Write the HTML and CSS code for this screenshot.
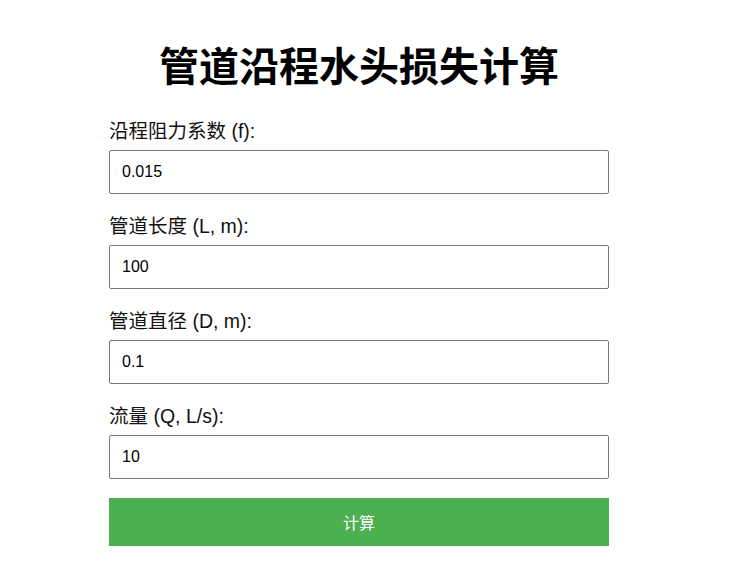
FILE: index.html
```html
<!DOCTYPE html>
<html lang="zh">
<head>
<meta charset="utf-8">
<title>管道沿程水头损失计算</title>
<link rel="stylesheet" href="styles.css">
</head>
<body>
<div class="container">
  <h1 class="title">管道沿程水头损失计算</h1>
  <form class="calc-form">
    <div class="field">
      <label class="field-label" for="f">沿程阻力系数 (f):</label>
      <input class="field-input" id="f" type="text" value="0.015">
    </div>
    <div class="field">
      <label class="field-label" for="L">管道长度 (L, m):</label>
      <input class="field-input" id="L" type="text" value="100">
    </div>
    <div class="field">
      <label class="field-label" for="D">管道直径 (D, m):</label>
      <input class="field-input" id="D" type="text" value="0.1">
    </div>
    <div class="field field-last">
      <label class="field-label" for="Q">流量 (Q, L/s):</label>
      <input class="field-input" id="Q" type="text" value="10">
    </div>
    <button class="calc-btn" type="button">计算</button>
  </form>
</div>
</body>
</html>
```
FILE: styles.css
```css
html, body {
  margin: 0;
  padding: 0;
  background: #fff;
}
body {
  font-family: "Liberation Sans", "Noto Sans CJK SC", sans-serif;
  color: #000;
}
.container {
  width: 500px;
  margin-left: 109px;
  padding-top: 43px;
}
.title {
  margin: 0 0 29px;
  height: 48px;
  font-size: 40px;
  line-height: 48px;
  font-weight: bold;
  text-align: center;
}
.calc-form {
  display: block;
}
.field {
  display: block;
  height: 74px;
  margin-bottom: 21px;
}
.field-last {
  margin-bottom: 19px;
}
.field-label {
  display: block;
  height: 22px;
  font-size: 19.5px;
  line-height: 22px;
  margin-bottom: 8px;
  color: #111;
  white-space: nowrap;
}
.field-input {
  display: block;
  box-sizing: border-box;
  width: 500px;
  height: 44px;
  margin: 0;
  padding: 0 12px;
  border: 1px solid #767676;
  border-radius: 2px;
  font-family: "Liberation Sans", "Noto Sans CJK SC", sans-serif;
  font-size: 16px;
  color: #000;
  background: #fff;
}
.calc-btn {
  display: block;
  box-sizing: border-box;
  width: 500px;
  height: 48px;
  margin: 0;
  padding: 0;
  border: none;
  background: #4caf50;
  color: #fff;
  font-size: 16px;
  font-family: "Liberation Sans", "Noto Sans CJK SC", sans-serif;
  cursor: pointer;
}
```
